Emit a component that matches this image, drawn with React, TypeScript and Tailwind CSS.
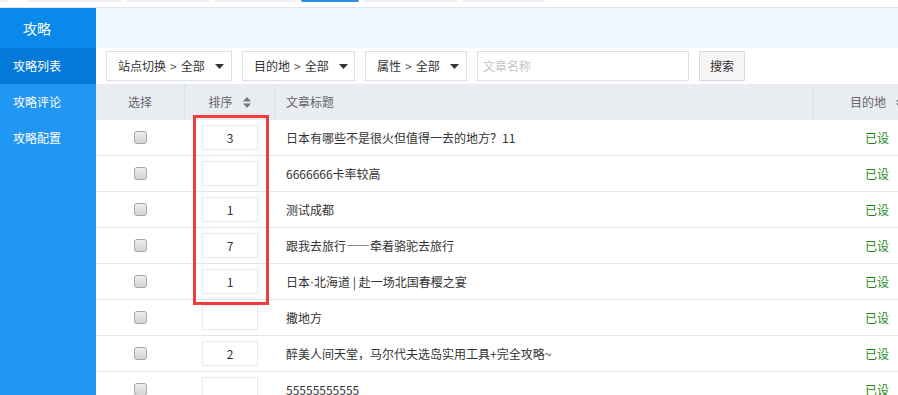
import React from 'react';

interface Article {
  sort: string;
  title: React.ReactNode;
}

const articles: Article[] = [
  { sort: '3', title: '日本有哪些不是很火但值得一去的地方？11' },
  { sort: '', title: '6666666卡率较高' },
  { sort: '1', title: '测试成都' },
  {
    sort: '7',
    title: (
      <>
        跟我去旅行<span className="[font-feature-settings:'fwid']">——</span>牵着骆驼去旅行
      </>
    ),
  },
  {
    sort: '1',
    title: (
      <>
        日本<span className="font-['Liberation_Sans']">·</span>北海道 | 赴一场北国春樱之宴
      </>
    ),
  },
  { sort: '', title: '撒地方' },
  { sort: '2', title: '醉美人间天堂，马尔代夫选岛实用工具+完全攻略~' },
  { sort: '', title: '55555555555' },
];

// top strip tabs (partially visible)
const tabs = [
  { l: 0, w: 8 },
  { l: 28, w: 93 },
  { l: 126, w: 83 },
  { l: 214, w: 82 },
  { l: 301, w: 58, active: true },
  { l: 364, w: 94 },
  { l: 463, w: 82 },
];

const Caret = () => (
  <svg width="9" height="5" viewBox="0 0 9 5" className="ml-[10px]">
    <path d="M0 0h9L4.5 5z" fill="#333" />
  </svg>
);

const SortIcon = () => (
  <svg width="8" height="11" viewBox="0 0 8 11" className="ml-[10px] shrink-0">
    <path d="M0 4.5L4 0l4 4.5z" fill="#777" />
    <path d="M0 6.5h8L4 11z" fill="#777" />
  </svg>
);

const Checkbox = () => (
  <span className="block h-[13px] w-[13px] rounded-[3px] border border-[#a6a6a6] bg-gradient-to-b from-[#ececec] to-[#d4d4d4]" />
);

const FilterSelect = ({ label, width }: { label: string; width: string }) => (
  <div className={`flex h-[30px] ${width} items-center border border-[#dcdfe4] bg-white pl-[11px] text-[12px] text-[#333]`}>
    <span>{label}</span>
    <span className="mx-[4px] text-[#555]">&gt;</span>
    <span>全部</span>
    <Caret />
  </div>
);

export default function App() {
  return (
    <div
      className="relative h-[395px] w-full overflow-hidden bg-white"
      style={{ fontFamily: '"Microsoft YaHei", "Noto Sans CJK SC", "Noto Sans", sans-serif' }}
    >
      {/* top strip */}
      <div className="relative h-[7px] border-b border-[#dfe5ec] bg-white box-content">
        {tabs.map((t, i) => (
          <div
            key={i}
            className={`absolute top-0 h-[2px] rounded-b-[3px] ${t.active ? 'bg-[#2a8de2]' : 'bg-[#edf0f4]'}`}
            style={{ left: t.l, width: t.w }}
          />
        ))}
      </div>

      <div className="flex">
        {/* sidebar */}
        <div className="flex h-[387px] w-[96px] shrink-0 flex-col bg-[#2196f3] text-white">
          <div className="flex h-[40px] items-center bg-[#0a89ea] pl-[23px] text-[14px]">攻略</div>
          <div className="flex h-[36px] items-center bg-[#0479d8] pl-[13px] text-[12px]">攻略列表</div>
          <div className="flex h-[36px] items-center pl-[13px] text-[12px]">攻略评论</div>
          <div className="flex h-[36px] items-center pl-[13px] text-[12px]">攻略配置</div>
        </div>

        {/* main */}
        <div className="min-w-0 flex-1 overflow-hidden">
          <div className="h-[40px] bg-[#eff6fe]" />

          <div className="flex h-[36px] items-center gap-[10px] pl-[10px]">
            <FilterSelect label="站点切换" width="w-[126px]" />
            <FilterSelect label="目的地" width="w-[113px]" />
            <FilterSelect label="属性" width="w-[102px]" />
            <div className="flex h-[30px] w-[212px] items-center border border-[#dcdfe4] pl-[5px] text-[12px] text-[#c6c6c6]">
              文章名称
            </div>
            <button className="h-[30px] w-[46px] border border-[#dadada] bg-[#f5f5f5] text-[12px] text-[#333]">
              搜索
            </button>
          </div>

          <div className="w-[844px]">
            <div className="flex h-[36px] bg-[#e9ecf1] text-[12px] text-[#666]">
              <div className="flex w-[89px] items-center justify-center border-r border-[#dbe0e6]">选择</div>
              <div className="flex w-[90px] items-center justify-center border-r border-[#dbe0e6]">
                排序
                <SortIcon />
              </div>
              <div className="flex w-[539px] items-center border-r border-[#dbe0e6] pl-[11px]">文章标题</div>
              <div className="flex w-[126px] items-center justify-center">
                目的地
                <SortIcon />
              </div>
            </div>

            {articles.map((a, i) => (
              <div key={i} className="flex h-[36px] border-b border-[#e3e7ec] text-[12px] text-[#333]">
                <div className="flex w-[89px] items-center justify-center">
                  <Checkbox />
                </div>
                <div className="flex w-[90px] items-center justify-center">
                  <div className="flex h-[25px] w-[56px] items-center justify-center border border-[#e8e8e8] bg-white text-[#333]">
                    {a.sort}
                  </div>
                </div>
                <div className="flex w-[539px] items-center pl-[11px]">{a.title}</div>
                <div className="flex w-[126px] items-center justify-center text-[#178a17]">已设</div>
              </div>
            ))}
          </div>
        </div>
      </div>

      {/* highlight box */}
      <div className="pointer-events-none absolute left-[193px] top-[115px] h-[190px] w-[76px] border-[3px] border-[#f23b3b]" />
    </div>
  );
}
